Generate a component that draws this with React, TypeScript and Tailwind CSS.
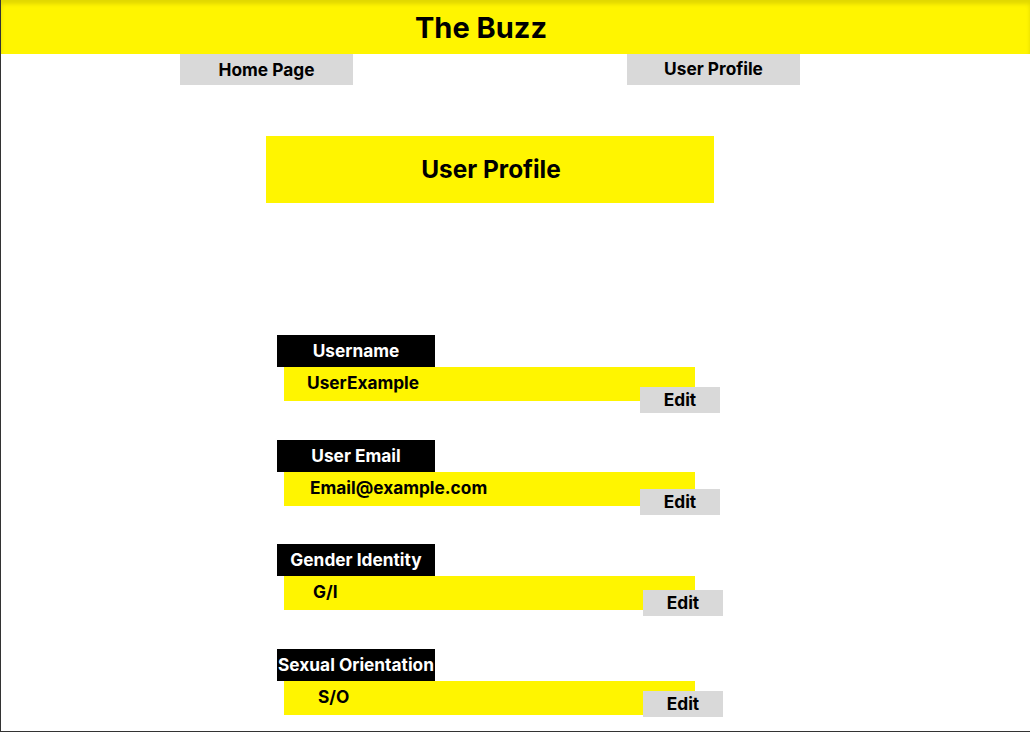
const fields = [
  { label: "Username", value: "UserExample", valuePad: "pl-[23px]", edit: "left-[356px] top-[20px]", gap: "mt-[132px]" },
  { label: "User Email", value: "Email@example.com", valuePad: "pl-[26px]", edit: "left-[356px] top-[17px]", gap: "mt-[39px]" },
  { label: "Gender Identity", value: "G/I", valuePad: "pl-[29px]", edit: "left-[359px] top-[14px]", gap: "mt-[38px]" },
  { label: "Sexual Orientation", value: "S/O", valuePad: "pl-[34px]", edit: "left-[359px] top-[10px]", gap: "mt-[39px]" },
];

export default function App() {
  return (
    <div className="w-[1030px] h-[732px] overflow-hidden bg-white border-l border-b border-[#333333] font-['Inter',sans-serif] text-black">
      {/* Header */}
      <div className="h-[54px] bg-[#FFF500] shadow-[inset_0_4px_4px_rgba(0,0,0,0.12)] flex items-center pl-[414px]">
        <h1 className="text-[29px] font-bold leading-none">The Buzz</h1>
      </div>

      {/* Nav */}
      <div className="flex pl-[179px] gap-[274px]">
        <button className="w-[173px] h-[31px] bg-[#D9D9D9] text-[17.3px] font-bold leading-none">Home Page</button>
        <button className="w-[173px] h-[31px] bg-[#D9D9D9] text-[17.3px] font-bold leading-none pb-[2px]">User Profile</button>
      </div>

      {/* Profile */}
      <div className="pl-[265px]">
        <div className="mt-[51px] w-[448px] h-[67px] bg-[#FFF500] flex items-center justify-center pl-[2px]">
          <h2 className="text-[24.4px] font-bold leading-none">User Profile</h2>
        </div>

        <div className="flex flex-col pl-[11px]">
          {fields.map((f) => (
            <div key={f.label} className={f.gap}>
              <div className="w-[158px] h-[32px] bg-black text-white text-[17.3px] font-bold flex items-center justify-center whitespace-nowrap">
                {f.label}
              </div>
              <div className="relative ml-[7px] w-[411px] h-[34px] bg-[#FFF500]">
                <div className={`${f.valuePad} pt-[6px] text-[17.3px] font-bold leading-[20px]`}>{f.value}</div>
                <button className={`absolute ${f.edit} w-[80px] h-[26px] bg-[#D9D9D9] text-[17.3px] font-bold leading-none`}>
                  Edit
                </button>
              </div>
            </div>
          ))}
        </div>
      </div>
    </div>
  );
}
